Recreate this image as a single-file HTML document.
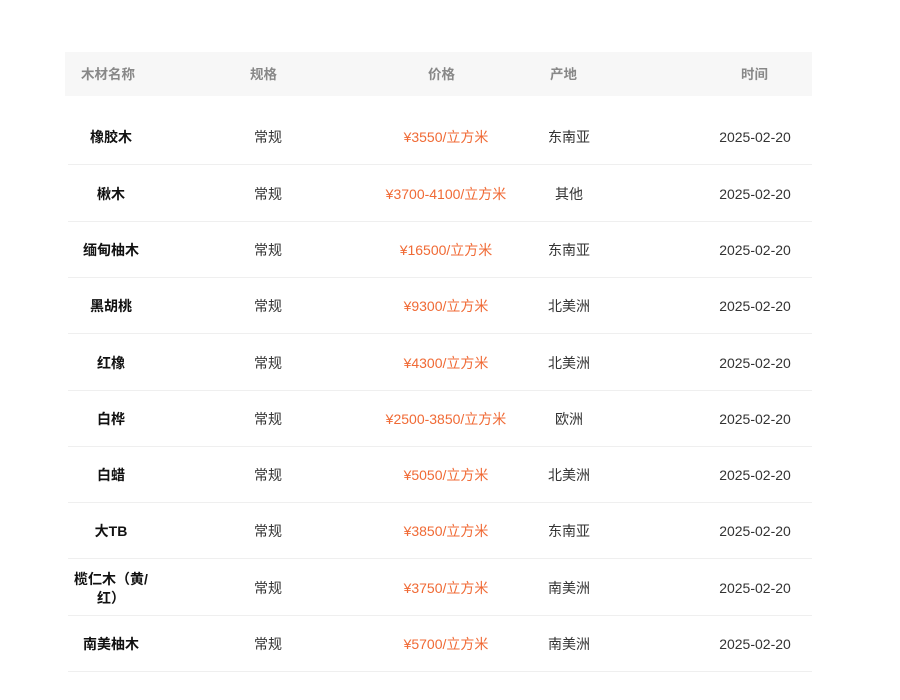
<!DOCTYPE html>
<html><head><meta charset="utf-8"><style>
body{margin:0;width:900px;height:700px;background:#fff;font-family:"Liberation Sans","Noto Sans CJK SC",sans-serif;font-size:14px;color:#333;position:relative;overflow:hidden}
.hd{position:absolute;left:65px;top:52px;width:747px;height:44px;background:#f7f7f7}
.h{position:absolute;top:67px;color:#888;font-weight:bold;font-size:13.5px;line-height:16px}
.c{position:absolute;width:200px;text-align:center;line-height:19px}
.n{font-weight:bold;color:#111}
.p{color:#f06a35}
.ln{position:absolute;left:68px;width:744px;height:1px;background:#efefef}
</style></head><body>
<div class="hd"></div>
<div class="h" style="left:81px">木材名称</div>
<div class="h" style="left:250px">规格</div>
<div class="h" style="left:428px">价格</div>
<div class="h" style="left:550px">产地</div>
<div class="h" style="left:741px">时间</div>
<div id="rows"></div>
<script>
var d=[["橡胶木","¥3550/立方米","东南亚"],["楸木","¥3700-4100/立方米","其他"],["缅甸柚木","¥16500/立方米","东南亚"],["黑胡桃","¥9300/立方米","北美洲"],["红橡","¥4300/立方米","北美洲"],["白桦","¥2500-3850/立方米","欧洲"],["白蜡","¥5050/立方米","北美洲"],["大TB","¥3850/立方米","东南亚"],["榄仁木（黄/<br>红）","¥3750/立方米","南美洲"],["南美柚木","¥5700/立方米","南美洲"]];
var lines=[164,221,277,333,390,446,502,558,615,671],h="";
for(var i=0;i<10;i++){var y=lines[i]-27-9;var ny=i==8?y-9:y;
h+='<div class="c n" style="left:11px;top:'+ny+'px;'+(i==8?'width:96px;left:63px':'')+'">'+d[i][0]+'</div>';
h+='<div class="c" style="left:168px;top:'+y+'px">常规</div>';
h+='<div class="c p" style="left:346px;top:'+y+'px">'+d[i][1]+'</div>';
h+='<div class="c" style="left:469px;top:'+y+'px">'+d[i][2]+'</div>';
h+='<div class="c" style="left:655px;top:'+y+'px">2025-02-20</div>';
h+='<div class="ln" style="top:'+lines[i]+'px"></div>';}
document.getElementById("rows").innerHTML=h;
</script>
</body></html>
